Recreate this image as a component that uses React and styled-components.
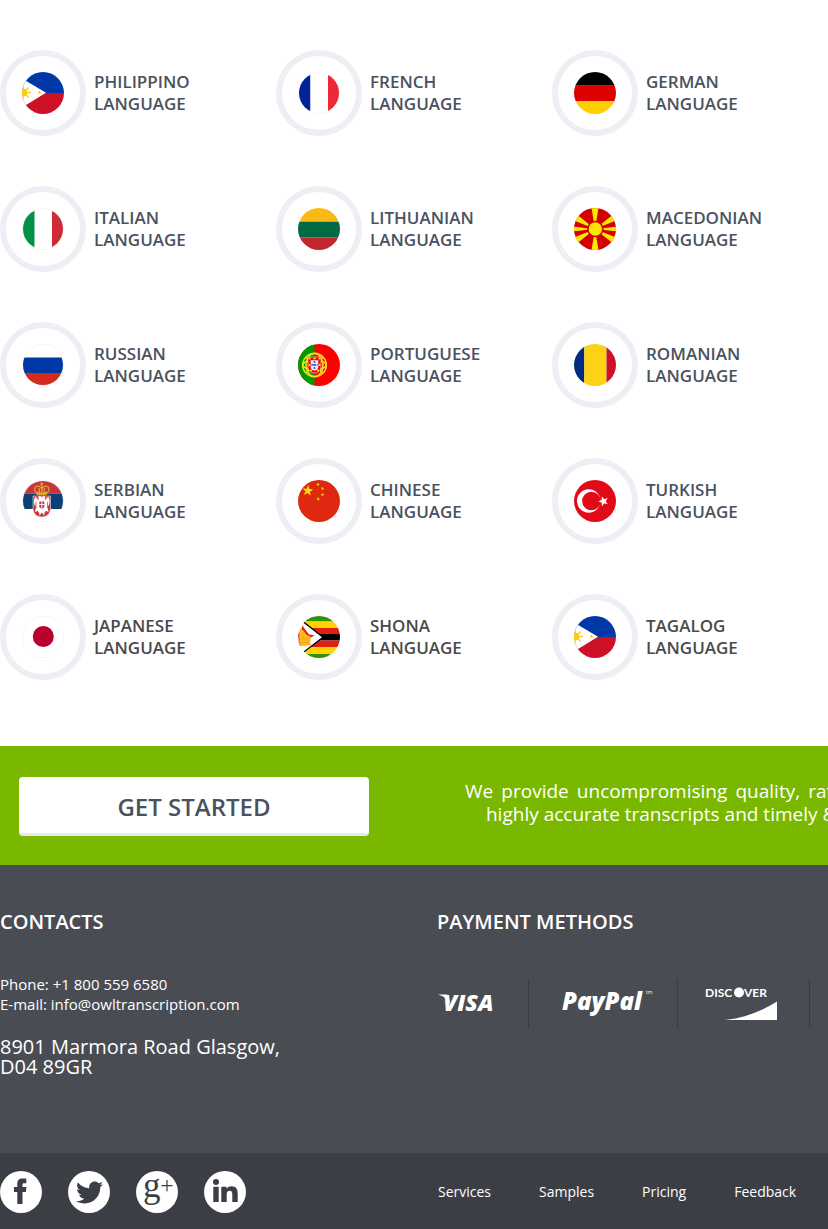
import React from "react";
import styled, { createGlobalStyle } from "styled-components";
import { FaTwitter } from "react-icons/fa";

const GlobalStyle = createGlobalStyle`
  *, *::before, *::after { box-sizing: border-box; }
  body {
    margin: 0;
    background: #fff;
    color: #4a525e;
    font-family: "Open Sans", "Noto Sans", sans-serif;
  }
  h2, p, ul, address { margin: 0; padding: 0; }
  ul { list-style: none; }
`;

const Page = styled.div`
  overflow-x: hidden;
`;

const LanguageGrid = styled.ul`
  display: grid;
  grid-template-columns: repeat(3, minmax(0, 1fr));
  row-gap: 50px;
  padding: 50px 0 66px;
`;

const Language = styled.li`
  display: flex;
  align-items: center;
  gap: 8px;
`;

const Ring = styled.span`
  display: flex;
  flex: none;
  align-items: center;
  justify-content: center;
  width: 86px;
  height: 86px;
  border: 6px solid #eeeff5;
  border-radius: 50%;
`;

const Flag = styled.svg`
  width: ${(p) => (p.$pale ? 40 : 42)}px;
  height: ${(p) => (p.$pale ? 40 : 42)}px;
  border-radius: 50%;
  box-shadow: ${(p) => (p.$pale ? "0 0 0 1px #f5f5f7" : "none")};
`;

const LanguageName = styled.span`
  display: flex;
  flex-direction: column;
  font-size: 17px;
  font-weight: 600;
  line-height: 22px;
  color: ${(p) => (p.$neutral ? "#4a4a4a" : "#4a525e")};
`;

const Banner = styled.section`
  display: flex;
  align-items: center;
  gap: 96px;
  padding: 31px 0 29px 19px;
  background: #7ab800;
  overflow: hidden;
`;

const StartButton = styled.button`
  flex: none;
  width: 350px;
  height: 59px;
  padding: 4px 0 0;
  border: 0;
  border-bottom: 3px solid #e9e9ec;
  border-radius: 4px;
  background: #fff;
  color: #4a525e;
  font: 600 24px/52px "Open Sans", "Noto Sans", sans-serif;
  cursor: pointer;
`;

const Pitch = styled.p`
  flex: none;
  width: 430px;
  padding-bottom: 8px;
  color: #fff;
  font-size: 19px;
  line-height: 23px;
  text-align: justify;
  text-align-last: center;
`;

const Columns = styled.div`
  display: grid;
  grid-template-columns: minmax(0, 19fr) minmax(0, 17fr);
`;

const Footer = styled.footer`
  color: #fff;
  background: #4a4c54;
`;

const FooterMain = styled(Columns)`
  padding: 42px 0 76px;
`;

const FooterTitle = styled.h2`
  font-size: 20px;
  font-weight: 600;
  line-height: 30px;
`;

const Contact = styled.address`
  padding-top: 37px;
  font-style: normal;
`;

const ContactLine = styled.p`
  font-size: 15px;
  line-height: 20px;
`;

const ContactLink = styled.a`
  color: inherit;
  text-decoration: none;
`;

const Street = styled.p`
  padding-top: 23px;
  font-size: 20px;
  line-height: 20px;
`;

const Payments = styled.ul`
  display: flex;
  padding-top: 42px;
`;

const Payment = styled.li`
  flex: none;
  width: ${(p) => p.$width}px;
  height: 49px;
  border-right: 1px solid #3c3c3f;
`;

const Logo = styled.svg`
  display: block;
  width: 100%;
  height: 49px;
  fill: #fff;
  font-family: "Open Sans", "Noto Sans", sans-serif;
`;

const FooterBar = styled(Columns)`
  align-items: center;
  height: 76px;
  padding-top: 2px;
  background: #3c3e46;
`;

const Social = styled.ul`
  display: flex;
  gap: 26px;
`;

const SocialLink = styled.a`
  display: flex;
  align-items: center;
  justify-content: center;
  width: 42px;
  height: 42px;
  border-radius: 50%;
  background: #fff;
  color: #3c3e46;
`;

const Mark = styled.svg`
  width: 42px;
  height: 42px;
  fill: currentColor;
  overflow: visible;
`;

const Nav = styled.nav`
  display: flex;
  gap: 48px;
  padding-left: 1px;
`;

const NavLink = styled.a`
  color: #fff;
  font-size: 14px;
  line-height: 20px;
  text-decoration: none;
`;

const Stripes = ({ colors, stops, vertical }) =>
  colors.map((c, i) => {
    const size = stops[i + 1] - stops[i];
    return vertical ? (
      <rect key={i} x={stops[i]} width={size} height="42" fill={c} />
    ) : (
      <rect key={i} y={stops[i]} width="42" height={size} fill={c} />
    );
  });

const starPoints = (cx, cy, r, turn = -90) =>
  Array.from({ length: 10 }, (_, i) => {
    const a = ((turn + i * 36) * Math.PI) / 180;
    const d = i % 2 ? r * 0.4 : r;
    return `${(cx + d * Math.cos(a)).toFixed(2)},${(cy + d * Math.sin(a)).toFixed(2)}`;
  }).join(" ");

const Philippines = () => (
  <>
    <path fill="#0038a8" d="M0 0h42v21H0z" />
    <path fill="#ce1126" d="M0 21h42v21H0z" />
    <path fill="#fff" d="M0 6.500 24 20.700 0 35.500z" />
    <g stroke="#fcc916" strokeWidth="1.300" fill="#fcc916">
      <circle cx="1.500" cy="20.500" r="3" />
      <path d="M0 20.500h9M2 20.500l4.500-5M2 20.500l4.500 5M1 20.500v-6.500M1 20.500V27" />
      <circle cx="17.500" cy="20.500" r="1" strokeWidth="0.800" />
    </g>
  </>
);

const Macedonia = () => (
  <>
    <path fill="#d20000" d="M0 0h42v42H0z" />
    <path
      fill="#ffe600"
      d="M17.500 0h7L21 21zM17.500 42h7L21 21zM0 18.700v4.600L21 21zM42 18.700v4.600L21 21zM0 8V12.500l21 8.500L3.500 7zM42 8V12.500L21 21 38.500 7zM0 34V29.500l21-8.500L3.500 35zM42 34V29.500L21 21l17.500 14z"
    />
    <circle cx="21.300" cy="21" r="7.500" fill="#ffe600" stroke="#d20000" strokeWidth="1.600" />
  </>
);

const Portugal = () => (
  <>
    <path fill="#f00" d="M0 0h42v42H0z" />
    <path fill="#090" d="M0 0h16.500v42H0z" />
    <g fill="none" stroke="#f0e020" strokeWidth="1.500">
      <circle cx="16.500" cy="21" r="11.800" />
      <ellipse cx="16.500" cy="21" rx="11.800" ry="4.500" />
      <ellipse cx="16.500" cy="21" rx="8.500" ry="11.500" />
      <path d="M8 13l17 16M25 13 8 29" />
    </g>
    <path fill="#f00" stroke="#fff" strokeWidth="0.500" d="M10 13h13v9.500c0 4-2.700 6.500-6.500 6.500S10 26.500 10 22.500z" />
    <g fill="#ffe02a">
      {[[11.5, 14.5], [16.5, 14.5], [21.5, 14.5], [11.5, 21], [21.5, 21], [13, 26.5], [20, 26.5]].map(
        ([x, y]) => (
          <circle key={`${x}-${y}`} cx={x} cy={y} r="1.100" />
        )
      )}
    </g>
    <path fill="#e8ecff" d="M12.700 16.300h7.600v6.200c0 2.400-1.500 4-3.800 4s-3.800-1.600-3.800-4z" />
    <path
      stroke="#3b62c8"
      strokeWidth="1.700"
      strokeDasharray="2 1"
      d="M16.500 17v9M13.300 20.800h7"
    />
  </>
);

const Serbia = () => (
  <>
    <Stripes colors={["#c6363c", "#0c4076", "#fff"]} stops={[0, 13.5, 29, 42]} />
    <path fill="#c6363c" stroke="#eee" strokeWidth="0.600" d="M11 16h17.500v12c0 5-3 9-8.700 9S11 33 11 28z" />
    <path
      fill="#fff"
      d="M19.800 17.500l2-2 1.600 2-1 3 4-4c2 4 1.500 8-.8 10.500l.9 5-2.600-1-1.900 4.500-2.200-3-2.200 3-1.900-4.500-2.600 1 .9-5c-2.300-2.500-2.800-6.500-.8-10.500l4 4-1-3 1.600-2z"
    />
    <path fill="#c6363c" d="M17.300 21.500h5v5.500l-2.500 2-2.500-2z" />
    <path stroke="#fff" strokeWidth="0.900" d="M19.800 21.500v7M17.300 24.500h5" />
    <path fill="none" stroke="#c6363c" strokeWidth="0.800" d="M14 22v6M25.600 22v6M15.500 31l2 3M24 31l-2 3" />
    <g fill="none" stroke="#e0a52c" strokeWidth="1.300">
      <path d="M14.500 13c-2.500-2.500-2.500-5.500-.3-6.500 2-.8 4.300.3 5.600 2 1.300-1.700 3.600-2.800 5.600-2 2.200 1 2.200 4-.3 6.500M19.800 2.500v10M18.300 4h3M17 8l.8 5M22.600 8l-.8 5" />
    </g>
    <path fill="#e0a52c" d="M14 11.500l5.800 1 5.800-1-.8 3.500h-10z" />
  </>
);

const China = () => (
  <>
    <path fill="#de2910" d="M0 0h42v42H0z" />
    <g fill="#ffde00">
      <polygon points={starPoints(9.8, 10.8, 5.8, -84)} />
      <polygon points={starPoints(20, 4.5, 1.9, -60)} />
      <polygon points={starPoints(24.5, 8.5, 1.9, -80)} />
      <polygon points={starPoints(24.5, 14.5, 1.9)} />
      <polygon points={starPoints(20.3, 19, 1.9, -60)} />
    </g>
  </>
);

const Turkey = () => (
  <>
    <path fill="#e30a17" d="M0 0h42v42H0z" />
    <circle cx="14.700" cy="21" r="11.700" fill="#fff" />
    <circle cx="17.400" cy="21" r="9.300" fill="#e30a17" />
    <polygon fill="#fff" points={starPoints(29.5, 21.2, 5.3, 180)} />
  </>
);

const Japan = () => (
  <>
    <path fill="#fff" d="M0 0h42v42H0z" />
    <circle cx="21.300" cy="20.500" r="10.500" fill="#bc002d" />
  </>
);

const Zimbabwe = () => (
  <>
    <Stripes
      colors={["#319208", "#ffd200", "#de2010", "#000", "#de2010", "#ffd200", "#319208"]}
      stops={[0, 5.5, 12, 18, 24.5, 31, 38, 42]}
    />
    <path fill="#fff" stroke="#000" strokeWidth="1.300" d="M-2 0 25 21.300-2 42z" />
    <path fill="#fff" d="M0 0h5.500v42H0z" />
    <path
      fill="#de2010"
      d="M4.500 9.500l3 4.500 3.500 4.500 5.500.8-5 3.200-1 4.500 2.500 2-12 .5L0 18l3-3z"
    />
    <path
      fill="#fcb81c"
      d="M2 12.500l3.500 2.300L8.800 19l3.800 1.500v3.500l-1 5H1.300V16z"
    />
    <path stroke="#e3a317" strokeWidth="0.600" fill="none" d="M2 23h9.500M2 26.500h9M5.500 19v4M8.500 20v3" />
  </>
);

const LANGUAGES = [
  { name: "Philippino", flag: <Philippines /> },
  {
    name: "French",
    pale: true,
    flag: <Stripes vertical colors={["#002395", "#fff", "#ed2939"]} stops={[0, 12.5, 30, 42]} />,
  },
  { name: "German", flag: <Stripes colors={["#000", "#d00", "#ffce00"]} stops={[0, 13.7, 29.3, 42]} /> },
  {
    name: "Italian",
    pale: true,
    flag: <Stripes vertical colors={["#009246", "#fff", "#ce2b37"]} stops={[0, 12.7, 30, 42]} />,
  },
  { name: "Lithuanian", flag: <Stripes colors={["#fdb913", "#006a44", "#c1272d"]} stops={[0, 13.7, 29.3, 42]} /> },
  { name: "Macedonian", flag: <Macedonia /> },
  {
    name: "Russian",
    pale: true,
    flag: <Stripes colors={["#fff", "#0039a6", "#d52b1e"]} stops={[0, 13.5, 29, 42]} />,
  },
  { name: "Portuguese", flag: <Portugal /> },
  {
    name: "Romanian",
    flag: <Stripes vertical colors={["#002b7f", "#fcd116", "#ce1126"]} stops={[0, 10.3, 32.5, 42]} />,
  },
  { name: "Serbian", pale: true, flag: <Serbia /> },
  { name: "Chinese", flag: <China /> },
  { name: "Turkish", flag: <Turkey /> },
  { name: "Japanese", pale: true, neutral: true, flag: <Japan /> },
  { name: "Shona", neutral: true, flag: <Zimbabwe /> },
  { name: "Tagalog", neutral: true, flag: <Philippines /> },
];

const VisaLogo = () => (
  <Logo role="img" aria-label="Visa">
    <path d="M1 15.500h8c2 0 2.800 1 3.200 3l1 7C11 20.500 7 17 1 15.500z" />
    <text x="6" y="32" fontSize="23" fontWeight="800" fontStyle="italic">
      VISA
    </text>
  </Logo>
);

const PayPalLogo = () => (
  <Logo role="img" aria-label="PayPal">
    <text x="33" y="31" fontSize="24" fontWeight="800" fontStyle="italic">
      PayPal
    </text>
    <text x="117" y="15" fontSize="5">
      tm
    </text>
  </Logo>
);

const DiscoverLogo = () => (
  <Logo role="img" aria-label="Discover">
    <g fontFamily="Lato, sans-serif" fontSize="12" fontWeight="700">
      <text x="27" y="18">DISC</text>
      <text x="66" y="18">VER</text>
    </g>
    <circle cx="61" cy="13.500" r="5" />
    <path d="M47 41c20-2 37-9 52-18.500V41z" />
  </Logo>
);

const FacebookMark = () => (
  <Mark aria-hidden="true">
    <path d="M17.300 33V21H14v-5h3.300v-3c0-3.800 1.800-5.500 5.200-5.500h3.800v4.700h-2.400c-1.200 0-1.400.6-1.400 1.700V16h3.900l-.5 5h-3.400v12z" />
  </Mark>
);

const GooglePlusMark = () => (
  <Mark aria-hidden="true">
    <text x="7" y="26" fontFamily="Liberation Serif, serif" fontSize="35">
      g
    </text>
    <path d="M25.500 14h11v1.200h-11zM30.400 9h1.200v11.200h-1.200z" />
  </Mark>
);

const LinkedInMark = () => (
  <Mark aria-hidden="true">
    <circle cx="12" cy="11" r="3" />
    <path d="M9.300 15.700h5.400V31H9.300zM17.300 15.700h5.200v2.200c.9-1.600 2.700-2.600 5-2.600 4.500 0 6.200 2.800 6.200 7.200V31h-5.400v-7.600c0-2.200-.5-3.700-2.600-3.700-2.200 0-3 1.600-3 3.700V31h-5.400z" />
  </Mark>
);

const SOCIALS = [
  ["Facebook", <FacebookMark />],
  ["Twitter", <FaTwitter size={27} />],
  ["Google Plus", <GooglePlusMark />],
  ["LinkedIn", <LinkedInMark />],
];

export default function App() {
  return (
    <Page>
      <GlobalStyle />
      <main>
        <LanguageGrid>
          {LANGUAGES.map(({ name, flag, pale, neutral }) => (
            <Language key={name}>
              <Ring>
                <Flag
                  $pale={pale}
                  viewBox={pale ? "1 1 40 40" : "0 0 42 42"}
                  aria-hidden="true"
                >
                  {flag}
                </Flag>
              </Ring>
              <LanguageName $neutral={neutral}>
                <span>{name.toUpperCase()}</span>
                <span>LANGUAGE</span>
              </LanguageName>
            </Language>
          ))}
        </LanguageGrid>
        <Banner>
          <StartButton type="button">GET STARTED</StartButton>
          <Pitch>
            We provide uncompromising quality, rates and highly accurate
            transcripts and timely &amp; fast
          </Pitch>
        </Banner>
      </main>
      <Footer>
        <FooterMain>
          <section>
            <FooterTitle>CONTACTS</FooterTitle>
            <Contact>
              <ContactLine>Phone: +1 800 559 6580</ContactLine>
              <ContactLine>
                E-mail:{" "}
                <ContactLink href="mailto:info@owltranscription.com">
                  info@owltranscription.com
                </ContactLink>
              </ContactLine>
              <Street>
                8901 Marmora Road Glasgow,
                <br />
                D04 89GR
              </Street>
            </Contact>
          </section>
          <section>
            <FooterTitle>PAYMENT METHODS</FooterTitle>
            <Payments>
              <Payment $width={92}>
                <VisaLogo />
              </Payment>
              <Payment $width={149}>
                <PayPalLogo />
              </Payment>
              <Payment $width={132}>
                <DiscoverLogo />
              </Payment>
            </Payments>
          </section>
        </FooterMain>
        <FooterBar>
          <Social>
            {SOCIALS.map(([name, mark]) => (
              <li key={name}>
                <SocialLink href="#" aria-label={name}>
                  {mark}
                </SocialLink>
              </li>
            ))}
          </Social>
          <Nav>
            {["Services", "Samples", "Pricing", "Feedback"].map((item) => (
              <NavLink key={item} href="#">
                {item}
              </NavLink>
            ))}
          </Nav>
        </FooterBar>
      </Footer>
    </Page>
  );
}
